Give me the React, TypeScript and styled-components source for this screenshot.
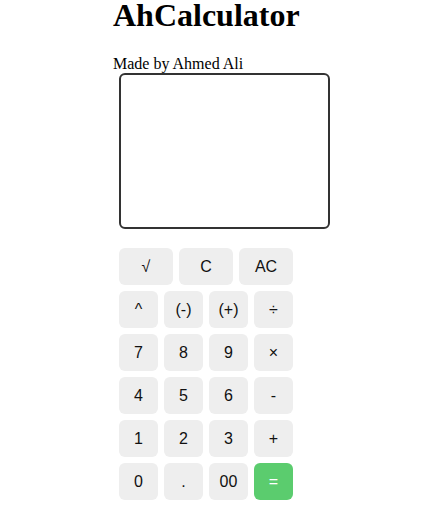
import React from "react";
import styled, { createGlobalStyle } from "styled-components";

const Global = createGlobalStyle`
  html, body { margin: 0; padding: 0; background: #ffffff; }
  body { font-family: "Liberation Serif", "Times New Roman", serif; color: #000; }
`;

const Page = styled.div`
  width: 200px;
  margin: 0 auto;
`;

const Title = styled.h1`
  font-family: "Liberation Serif", "Times New Roman", serif;
  font-size: 32px;
  line-height: 30px;
  font-weight: bold;
  margin: 0 0 25px 0;
  white-space: nowrap;
`;

const Credit = styled.div`
  font-size: 16px;
  line-height: normal;
  white-space: nowrap;
`;

const Display = styled.div`
  box-sizing: border-box;
  width: 211px;
  height: 156px;
  margin-left: 6px;
  border: 2px solid #333333;
  border-radius: 6px;
  background: #ffffff;
`;

const Keypad = styled.div`
  margin: 19px 0 0 6px;
  display: flex;
  flex-direction: column;
  gap: 6px;
  width: 174px;
`;

const Row = styled.div<{ $cols: number }>`
  display: grid;
  grid-template-columns: repeat(${(p) => p.$cols}, 1fr);
  column-gap: 6px;
`;

const Key = styled.button<{ $accent?: boolean }>`
  height: 37px;
  border: none;
  border-radius: 6px;
  padding: 0;
  background: ${(p) => (p.$accent ? "#5bcc6e" : "#eeeeee")};
  color: ${(p) => (p.$accent ? "#ffffff" : "#111111")};
  font-family: "Liberation Sans", Arial, sans-serif;
  font-size: 16px;
  display: flex;
  align-items: center;
  justify-content: center;
  cursor: pointer;
`;

const rows: { cols: number; keys: string[] }[] = [
  { cols: 3, keys: ["√", "C", "AC"] },
  { cols: 4, keys: ["^", "(-)", "(+)", "÷"] },
  { cols: 4, keys: ["7", "8", "9", "×"] },
  { cols: 4, keys: ["4", "5", "6", "-"] },
  { cols: 4, keys: ["1", "2", "3", "+"] },
  { cols: 4, keys: ["0", ".", "00", "="] },
];

export default function App() {
  return (
    <>
      <Global />
      <Page>
        <Title>AhCalculator</Title>
        <Credit>Made by Ahmed Ali</Credit>
        <Display />
        <Keypad>
          {rows.map((r, i) => (
            <Row key={i} $cols={r.cols}>
              {r.keys.map((k) => (
                <Key key={k} $accent={k === "="}>
                  {k}
                </Key>
              ))}
            </Row>
          ))}
        </Keypad>
      </Page>
    </>
  );
}
